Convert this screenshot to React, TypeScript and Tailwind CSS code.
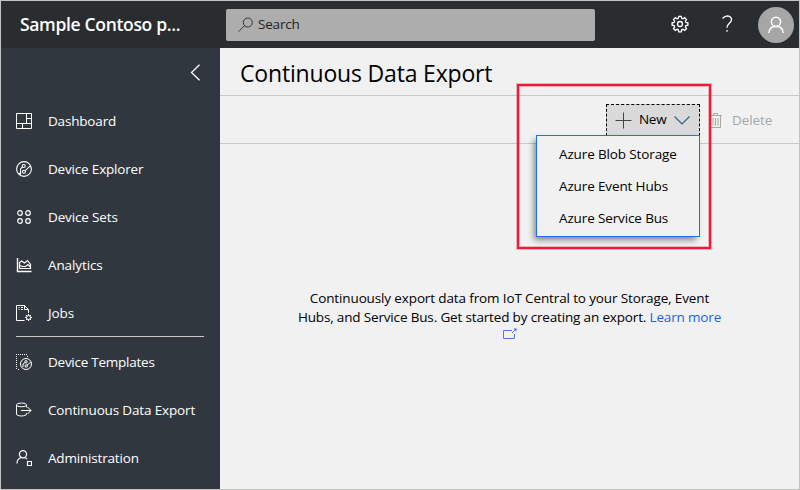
import type { ReactNode } from "react";

function Icon({ children, size = 16, className = "" }: { children: ReactNode; size?: number; className?: string }) {
  return (
    <svg
      width={size}
      height={size}
      viewBox={`0 0 ${size} ${size}`}
      fill="none"
      stroke="currentColor"
      strokeWidth="1"
      className={`shrink-0 ${className}`}
    >
      {children}
    </svg>
  );
}

const primary: { label: string; tracking: string; icon: ReactNode }[] = [
  {
    label: "Dashboard",
    tracking: "tracking-[-0.18px]",
    icon: <path d="M.5.5h15v15H.5zM10.5.5v10M.5 10.5h15M10.5 5.5h5M6.5 10.5v5" />,
  },
  {
    label: "Device Explorer",
    tracking: "tracking-[-0.18px]",
    icon: (
      <g strokeWidth="1.1">
        <circle cx="8" cy="8" r="7.4" />
        <circle cx="7.7" cy="5" r="1.5" />
        <circle cx="8" cy="10.8" r="1.5" />
        <path d="M6.4 5.9 4.6 8v4.8L3.5 14M9.2 9.7l4.9-4.6M3 13.2 5 11" />
      </g>
    ),
  },
  {
    label: "Device Sets",
    tracking: "tracking-[-0.15px]",
    icon: (
      <g strokeWidth="1.2">
        <circle cx="4" cy="4" r="2.3" />
        <circle cx="12" cy="4" r="2.3" />
        <circle cx="4" cy="12" r="2.3" />
        <circle cx="12" cy="12" r="2.3" />
      </g>
    ),
  },
  {
    label: "Analytics",
    tracking: "tracking-[-0.1px]",
    icon: (
      <>
        <path d="M1.500 1v13.500H15.500" strokeWidth="1.400" />
        <path d="M3.500 11.500v-6l2-1.500 3 2 3-2.500 3 4v4h-11M3.500 8.500l3 1 3 0 2.500-2 2.500 2.500" strokeWidth="1.200" />
      </>
    ),
  },
  {
    label: "Jobs",
    tracking: "tracking-[-0.1px]",
    icon: (
      <>
        <path d="M8.5 15.5h-8V.5h8l4 4V8M8.5.5v4h4M2.5 2.5h1M5 2.5h2M2.5 4.5h1M5 4.5h2" />
        <circle cx="12.5" cy="12.5" r="2" />
        <path d="M12.5 9v1.500M12.500 14.500V16M9 12.500h1.500M14.500 12.500H16M10 10l1 1M15 10l-1 1M10 15l1-1M15 15l-1-1" />
      </>
    ),
  },
];

const secondary: { label: string; tracking: string; icon: ReactNode }[] = [
  {
    label: "Device Templates",
    tracking: "tracking-[-0.25px]",
    icon: (
      <>
        <path d="M.5 0v16M2 .5h9M11.500 2v1M2 15.500h2" strokeDasharray="1 1" />
        <circle cx="10" cy="10" r="5.500" />
        <circle cx="10" cy="7.800" r="1.200" />
        <circle cx="10.200" cy="12" r="1.200" />
        <path d="M9 8.500 7 10v3M11 11.200l3.800-3" />
      </>
    ),
  },
  {
    label: "Continuous Data Export",
    tracking: "tracking-[-0.15px]",
    icon: (
      <>
        <ellipse cx="5.500" cy="2.900" rx="5" ry="1.900" />
        <path d="M.5 2.900v9.100c0 2.600 10 2.600 10 0v-.8M10.500 2.900v2.500M5 8.500h10M11.500 5l3.500 3.500-3.500 3.500" />
      </>
    ),
  },
  {
    label: "Administration",
    tracking: "tracking-[-0.18px]",
    icon: (
      <g strokeWidth="1.200">
        <circle cx="7" cy="4.200" r="3.600" />
        <path d="M1 13.500c0-3.500 2-5.500 4.500-6M8.500 7.500c1.200.3 2 .8 2.500 1.800M11.500 11.500h4v4h-4z" />
      </g>
    ),
  },
];

function NavItem({ label, icon, tracking }: { label: string; icon: ReactNode; tracking: string }) {
  return (
    <li className="flex h-12 items-center gap-4 pl-[15px] text-[13.500px]">
      <Icon>{icon}</Icon>
      <span className={`whitespace-nowrap ${tracking}`}>{label}</span>
    </li>
  );
}

export default function App() {
  return (
    <div className="relative flex h-[490px] w-[800px] flex-col overflow-hidden border border-[#c0c3c0] bg-[#f1f1f1] font-['Open_Sans','Noto_Sans',sans-serif] text-black">
      <header className="flex h-[47px] shrink-0 items-center bg-[#2a2d2f] text-white">
        <h1 className="w-[225px] pl-[19px] text-[17.500px] font-semibold tracking-[-0.330px]">Sample Contoso p...</h1>
        <div className="flex h-8 w-[369px] items-center rounded-[2px] bg-[#adadad] pl-3 text-[13.500px] text-[#222]">
          <Icon className="text-[#333]">
            <circle cx="9.800" cy="5.500" r="4.500" />
            <path d="M6.500 8.700.6 14.600" />
          </Icon>
          <span className="ml-[4px] tracking-[-0.2px]">Search</span>
        </div>
        <div className="ml-[76px] flex items-center">
          <Icon size={18} className="-translate-y-px">
            <g strokeWidth="1.300">
              <path d="M7.700 1.300h2.600l.4 2 1.300.5 1.700-1.100 1.800 1.800-1.100 1.700.5 1.300 2 .4v2.300l-2 .4-.5 1.300 1.100 1.700-1.800 1.800-1.700-1.100-1.300.5-.4 2H7.700l-.4-2-1.300-.5-1.700 1.100-1.800-1.800 1.100-1.700-.5-1.300-2-.4V7.900l2-.4.5-1.300-1.100-1.700 1.800-1.800L6 3.800l1.300-.5z" />
              <circle cx="9" cy="9" r="2.500" />
            </g>
          </Icon>
          <Icon size={18} className="ml-[29px] -translate-y-px">
            <path strokeWidth="1.300" d="M4.500 3.500C8.500-.8 13.600 1 13.500 4.700c-.1 3.400-4.500 4-4.500 8M9 15v1.800" />
          </Icon>
          <div className="ml-[22px] flex size-9 items-center justify-center rounded-full bg-[#a6a6a6]">
            <Icon size={18}>
              <g strokeWidth="1.500">
                <circle cx="9" cy="5.800" r="4.600" />
                <path d="M2 17c0-4 2.500-6.600 7-6.600s7 2.600 7 6.600" />
              </g>
            </Icon>
          </div>
        </div>
      </header>

      <div className="flex min-h-0 flex-1">
        <nav className="w-[219px] shrink-0 bg-[#31373f] text-white">
          <div className="flex h-[49px] items-center justify-end pr-[16px]">
            <Icon size={18}>
              <path d="M13.500.8 5.500 8.500l8 7.700" strokeWidth="1.300" />
            </Icon>
          </div>
          <ul>
            {primary.map((item) => (
              <NavItem key={item.label} {...item} />
            ))}
          </ul>
          <div className="-mt-px ml-[15px] h-px w-[188px] bg-[#c8c8c8]" />
          <ul className="pt-px">
            {secondary.map((item) => (
              <NavItem key={item.label} {...item} />
            ))}
          </ul>
        </nav>

        <main className="flex min-w-0 flex-1 flex-col">
          <div className="flex h-12 items-center border-b border-[#c8c8c8] pt-[3px] pl-5">
            <h2 className="text-[23px] leading-8 tracking-[-0.180px]">Continuous Data Export</h2>
          </div>
          <div className="flex h-12 shrink-0 justify-end border-b border-[#c8c8c8] pt-2 text-[13.500px]">
            <div className="relative h-8 w-[94px]">
              <button className="flex h-8 w-full items-center border border-dashed border-black bg-[#dadada] pb-px pl-[7px]">
                <Icon size={18} className="text-[#444]">
                  <path d="M9.500 1.500v16M1.500 9.500h16" />
                </Icon>
                <span className="ml-[7px] tracking-[-0.3px]">New</span>
                <Icon size={18} className="ml-[7px] text-[#2f6485]">
                  <path d="M1.500 5.500 9 13l7.500-7.500" strokeWidth="1.200" />
                </Icon>
              </button>
              <ul className="absolute top-[31px] right-0 h-[102px] w-[164px] border border-[#1a73ee] bg-[#f1f1f1] pt-[2px] pl-[22px] tracking-[-0.130px] shadow-[-3px_4px_6px_-1px_rgba(0,0,0,0.45)]">
                <li className="h-8 leading-8 whitespace-nowrap">Azure Blob Storage</li>
                <li className="h-8 leading-8 whitespace-nowrap">Azure Event Hubs</li>
                <li className="h-8 leading-8 whitespace-nowrap">Azure Service Bus</li>
              </ul>
            </div>
            <div className="flex h-8 w-[99px] items-center pl-[7px] text-[#a6a6a6]">
              <Icon>
                <path d="M2 3.500h13M6.500 3V1.500h4V3M3.500 4v11.500h10V4" />
                <path d="M6 6v7.500M8.500 6v7.500M11 6v7.500" stroke="#8fb48f" />
              </Icon>
              <span className="ml-[9px] tracking-[-0.1px]">Delete</span>
            </div>
          </div>
          <div className="pt-[145px] text-center text-[13.500px] leading-[19px]">
            <p className="tracking-[-0.130px]">Continuously export data from IoT Central to your Storage, Event</p>
            <p className="tracking-[-0.160px]">
              Hubs, and Service Bus. Get started by creating an export. <a className="text-[#1668d8]">Learn more</a>
            </p>
            <svg width="14" height="12" viewBox="0 0 14 12" fill="none" stroke="#5276dd" className="mx-auto mt-px">
              <path d="M9 2.500H.5v8h11V6M9 5l3.500-3.500" />
              <path d="M10.500.5h3v3z" fill="#3567dd" stroke="none" />
            </svg>
          </div>
        </main>
      </div>

      <div className="absolute top-[83px] left-[516px] h-[165px] w-[194px] border-2 border-[#ef1b38] shadow-[0_0_0_1px_rgba(239,27,56,0.3),inset_0_0_0_1px_rgba(239,27,56,0.3)]" />
    </div>
  );
}
